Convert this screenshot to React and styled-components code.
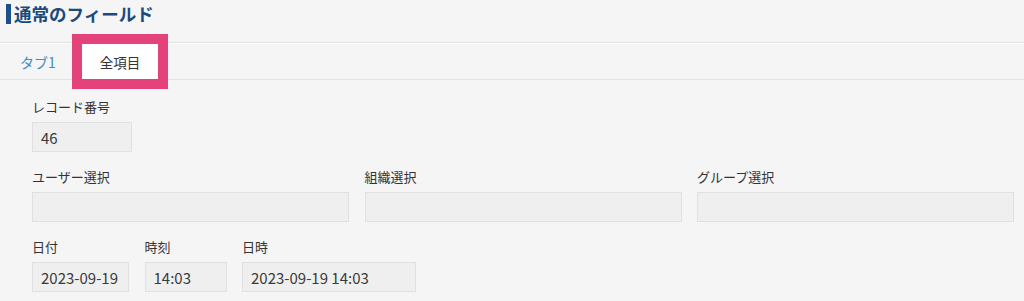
import React from "react";
import styled, { createGlobalStyle } from "styled-components";

const GlobalStyle = createGlobalStyle`
  html, body {
    margin: 0;
    padding: 0;
    background: #f5f5f5;
  }
  body {
    font-family: "Noto Sans CJK JP", "Noto Sans", sans-serif;
    color: #333;
  }
`;

const Page = styled.div`
  width: 1024px;
  height: 301px;
  overflow: hidden;
  background: #f5f5f5;
`;

const TitleBar = styled.div`
  height: 42px;
  padding: 4px 0 0 6px;
  box-sizing: border-box;
`;

const Title = styled.h2`
  margin: 0;
  font-size: 17.5px;
  line-height: 20px;
  font-weight: 700;
  color: #1b4a7c;
  border-left: 5px solid #1d4f8a;
  padding-left: 3px;
`;

const TabBar = styled.div`
  display: flex;
  gap: 8px;
  height: 38px;
  padding-left: 2px;
  box-sizing: border-box;
  border-top: 1px solid #e2e2e2;
  border-bottom: 1px solid #e2e2e2;
  box-shadow: inset 0 1px 0 #fff;
`;

const Tab = styled.div`
  display: flex;
  align-items: center;
  padding: 0 18px;
  margin-top: 1px;
  font-size: ${(p) => (p.$active ? "13.5px" : "14px")};
  color: ${(p) => (p.$active ? "#333" : "#3d8fc6")};
  background: ${(p) => (p.$active ? "#fff" : "transparent")};
  outline: ${(p) => (p.$active ? "10px solid #e3427b" : "none")};
`;

const Form = styled.div`
  padding: 19px 10px 0 32px;
  display: flex;
  flex-direction: column;
  gap: 17px;
`;

const Row = styled.div`
  display: grid;
  grid-template-columns: ${(p) => p.$cols};
  column-gap: ${(p) => p.$gap || "15px"};
`;

const Field = styled.div`
  display: flex;
  flex-direction: column;
  gap: 7px;
`;

const Label = styled.div`
  font-size: 13px;
  line-height: 16px;
  color: #333;
`;

const Input = styled.div`
  height: 30px;
  box-sizing: border-box;
  background: #efefef;
  border: 1px solid #e0e0e0;
  padding-left: 8px;
  display: flex;
  align-items: center;
  font-size: 15px;
  color: #3a3a3a;
`;

const App = () => (
  <Page>
    <GlobalStyle />
    <TitleBar>
      <Title>通常のフィールド</Title>
    </TitleBar>
    <TabBar>
      <Tab>タブ1</Tab>
      <Tab $active>全項目</Tab>
    </TabBar>
    <Form>
      <Row $cols="100px">
        <Field>
          <Label>レコード番号</Label>
          <Input>46</Input>
        </Field>
      </Row>
      <Row $cols="1fr 1fr 1fr" $gap="15.5px">
        <Field>
          <Label>ユーザー選択</Label>
          <Input />
        </Field>
        <Field>
          <Label>組織選択</Label>
          <Input />
        </Field>
        <Field>
          <Label>グループ選択</Label>
          <Input />
        </Field>
      </Row>
      <Row $cols="97px 82px 174px" $gap="15.5px">
        <Field>
          <Label>日付</Label>
          <Input>2023-09-19</Input>
        </Field>
        <Field>
          <Label>時刻</Label>
          <Input>14:03</Input>
        </Field>
        <Field>
          <Label>日時</Label>
          <Input>2023-09-19 14:03</Input>
        </Field>
      </Row>
    </Form>
  </Page>
);

export default App;
